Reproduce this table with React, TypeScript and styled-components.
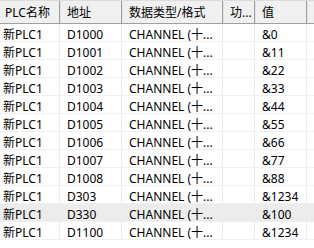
import React from 'react';
import styled, { createGlobalStyle } from 'styled-components';

const GlobalStyle = createGlobalStyle`
  html, body {
    margin: 0;
    padding: 0;
    background: #fff;
  }
  body {
    font-family: 'Noto Sans', 'Noto Sans CJK SC', sans-serif;
    font-size: 12px;
    color: #000;
  }
`;

const COLUMNS = '60px 62px 101px 32px 52px 1fr';

interface IRow {
  plc: string;
  address: string;
  type: string;
  func: string;
  value: string;
  selected?: boolean;
}

const rows: IRow[] = [
  { plc: '新PLC1', address: 'D1000', type: 'CHANNEL (十...', func: '', value: '&0' },
  { plc: '新PLC1', address: 'D1001', type: 'CHANNEL (十...', func: '', value: '&11' },
  { plc: '新PLC1', address: 'D1002', type: 'CHANNEL (十...', func: '', value: '&22' },
  { plc: '新PLC1', address: 'D1003', type: 'CHANNEL (十...', func: '', value: '&33' },
  { plc: '新PLC1', address: 'D1004', type: 'CHANNEL (十...', func: '', value: '&44' },
  { plc: '新PLC1', address: 'D1005', type: 'CHANNEL (十...', func: '', value: '&55' },
  { plc: '新PLC1', address: 'D1006', type: 'CHANNEL (十...', func: '', value: '&66' },
  { plc: '新PLC1', address: 'D1007', type: 'CHANNEL (十...', func: '', value: '&77' },
  { plc: '新PLC1', address: 'D1008', type: 'CHANNEL (十...', func: '', value: '&88' },
  { plc: '新PLC1', address: 'D303', type: 'CHANNEL (十...', func: '', value: '&1234' },
  { plc: '新PLC1', address: 'D330', type: 'CHANNEL (十...', func: '', value: '&100', selected: true },
  { plc: '新PLC1', address: 'D1100', type: 'CHANNEL (十...', func: '', value: '&1234' },
];

const headers = ['PLC名称', '地址', '数据类型/格式', '功...', '值', ''];

export default function App() {
  return (
    <>
      <GlobalStyle />
      <ListView>
        <HeaderRow>
          {headers.map((title, index) => (
            <HeaderCell key={index} $first={index === 0}>
              {title}
            </HeaderCell>
          ))}
        </HeaderRow>
        {rows.map((row) => (
          <Row key={row.address} $selected={row.selected}>
            <Cell $first>{row.plc}</Cell>
            <Cell>{row.address}</Cell>
            <Cell>{row.type}</Cell>
            <Cell>{row.func}</Cell>
            <Cell>{row.value}</Cell>
            <Cell />
          </Row>
        ))}
      </ListView>
    </>
  );
}

const ListView = styled.div`
  width: 314px;
  height: 248px;
  overflow: hidden;
  background: #fff;
`;

const HeaderRow = styled.div`
  display: grid;
  grid-template-columns: ${COLUMNS};
  height: 22px;
  background: #f0f0f0;
  border-top: 1px solid #dcdcdc;
  border-bottom: 1px solid #a0a0a0;
  box-sizing: content-box;
`;

const HeaderCell = styled.div<{ $first?: boolean }>`
  display: flex;
  align-items: center;
  padding-left: ${(p) => (p.$first ? '5px' : '7px')};
  padding-top: 1px;
  border-right: 1px solid #a0a0a0;
  box-shadow: inset 1px 0 0 ${(p) => (p.$first ? 'transparent' : '#e3e3e3')};
  white-space: nowrap;
  line-height: 14px;
`;

const Row = styled.div<{ $selected?: boolean }>`
  display: grid;
  grid-template-columns: ${COLUMNS};
  height: 17px;
  border-bottom: 1px solid #f0f0f0;
  background: ${(p) => (p.$selected ? '#ececec' : '#fff')};
  box-sizing: content-box;
`;

const Cell = styled.div<{ $first?: boolean }>`
  display: flex;
  align-items: flex-start;
  padding-left: ${(p) => (p.$first ? '3px' : '7px')};
  padding-top: 4px;
  box-sizing: border-box;
  border-right: 1px solid #ebebeb;
  white-space: nowrap;
  line-height: 13px;
`;
